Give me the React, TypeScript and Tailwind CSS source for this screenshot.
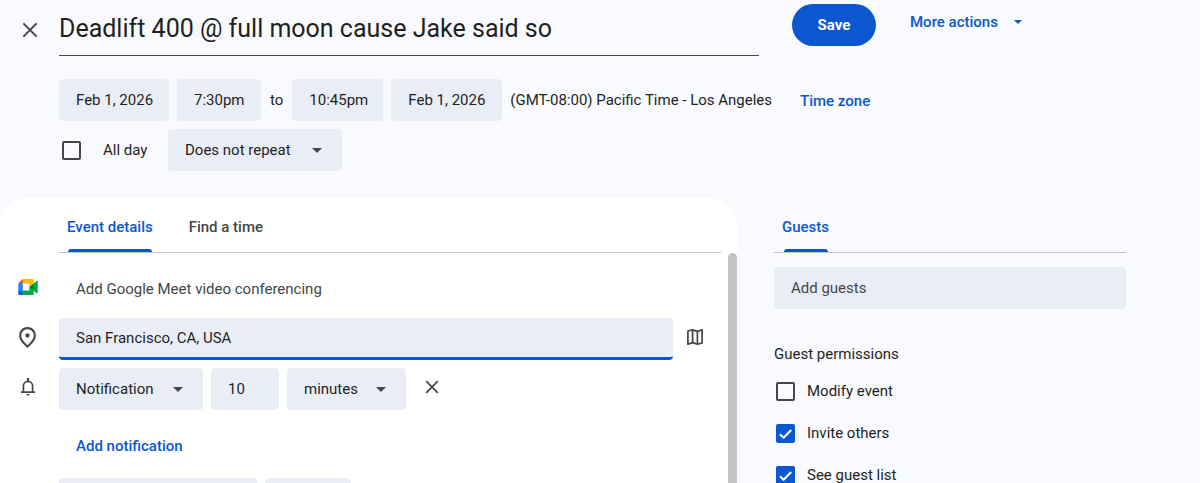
import React, { useState } from 'react';
import clsx from 'clsx';
import { MdOutlinePlace } from 'react-icons/md';

interface SelectFieldProps {
  label: string;
  options: string[];
  className?: string;
}

interface TextFieldProps {
  label: string;
  defaultValue?: string;
  placeholder?: string;
  className?: string;
}

interface CheckboxProps {
  label: string;
  checked: boolean;
  onChange: (checked: boolean) => void;
  className?: string;
}

const CaretIcon = ({ className }: { className?: string }) => (
  <svg viewBox="0 0 10 5" className={className} aria-hidden="true">
    <path d="M0 0h10L5 5z" fill="currentColor" />
  </svg>
);

const CloseIcon = ({ className }: { className?: string }) => (
  <svg viewBox="0 0 16 16" className={className} fill="none" stroke="currentColor" strokeWidth="2" aria-hidden="true">
    <path d="M1.4 1.4l13.2 13.2M14.6 1.4L1.4 14.6" />
  </svg>
);

const BellIcon = () => (
  <svg viewBox="0 0 16 18" className="h-[18px] w-4" fill="none" stroke="currentColor" aria-hidden="true">
    <path d="M1 14.2h14M3.4 14V8a4.6 4.6 0 0 1 9.2 0v6" strokeWidth="1.7" />
    <path d="M8 .6v2.6" strokeWidth="2.2" strokeLinecap="round" />
    <path d="M6.3 15.9h3.4A1.7 1.7 0 0 1 8 17.6a1.7 1.7 0 0 1-1.7-1.7z" fill="currentColor" stroke="none" />
  </svg>
);

const MeetIcon = () => (
  <svg viewBox="0 0 87.5 72" className="h-4 w-5" aria-hidden="true">
    <path fill="#00832d" d="M49.5 36l8.53 9.75 11.47 7.33 2-17.02-2-16.64-11.69 6.44z" />
    <path fill="#0066da" d="M0 51.5V66c0 3.315 2.685 6 6 6h14.5l3-10.96-3-9.54-9.95-3z" />
    <path fill="#e94235" d="M20.5 0L0 20.5l10.55 3 9.95-3 2.95-9.41z" />
    <path fill="#2684fc" d="M20.5 20.5H0v31h20.5z" />
    <path
      fill="#00ac47"
      d="M82.6 8.68L69.5 19.42v33.66l13.16 10.79c1.97 1.54 4.85.135 4.85-2.37V11c0-2.535-2.945-3.925-4.91-2.32zM49.5 36v15.5h-29V72h43c3.315 0 6-2.685 6-6V53.08z"
    />
    <path fill="#ffba00" d="M63.5 0h-43v20.5h29V36l20-16.57V6c0-3.315-2.685-6-6-6z" />
  </svg>
);

const MapIcon = () => (
  <svg viewBox="0 0 18 18" className="size-[18px]" fill="none" stroke="currentColor" aria-hidden="true">
    <path
      d="M1.9 3 6.6 1.9l4.8 1.5 4.7-1.6V15l-4.7 1.1-4.8-1.5-4.7 1.6z"
      strokeWidth="1.7"
      strokeLinejoin="round"
    />
    <path d="M6.6 1.9v12.7M11.4 3.4v12.7" strokeWidth="1.7" />
  </svg>
);

const TextField: React.FC<TextFieldProps> = ({ label, defaultValue, placeholder, className }) => (
  <input
    type="text"
    aria-label={label}
    defaultValue={defaultValue}
    placeholder={placeholder}
    className={clsx(
      'h-[42px] rounded bg-[#e9eef6] pr-3 pl-[17px] outline-none placeholder:text-[#444746] placeholder:opacity-100',
      className
    )}
  />
);

const SelectField: React.FC<SelectFieldProps> = ({ label, options, className }) => (
  <div className={clsx('relative h-[42px]', className)}>
    <select
      aria-label={label}
      className="h-full w-full appearance-none rounded bg-[#e9eef6] pr-10 pl-[17px] outline-none"
    >
      {options.map(option => (
        <option key={option}>{option}</option>
      ))}
    </select>
    <CaretIcon className="pointer-events-none absolute top-[19px] right-5 h-[5px] w-[10px] text-[#444746]" />
  </div>
);

const Checkbox: React.FC<CheckboxProps> = ({ label, checked, onChange, className }) => (
  <label className={clsx('flex items-center', className)}>
    <span className="grid size-[19px] shrink-0">
      <input
        type="checkbox"
        checked={checked}
        onChange={e => onChange(e.target.checked)}
        className="col-start-1 row-start-1 size-[19px] appearance-none rounded-xs border-2 border-[#444746] checked:border-[#0b57d0] checked:bg-[#0b57d0]"
      />
      {checked && (
        <svg viewBox="0 0 19 19" className="pointer-events-none col-start-1 row-start-1 size-[19px]" fill="none">
          <path d="M4 10.2l3.6 3.6L15.2 6" stroke="#fff" strokeWidth="2" />
        </svg>
      )}
    </span>
    {label}
  </label>
);

const App: React.FC = () => {
  const [title, setTitle] = useState('Deadlift 400 @ full moon cause Jake said so');
  const [allDay, setAllDay] = useState(false);
  const [permissions, setPermissions] = useState([
    { name: 'Modify event', allowed: false },
    { name: 'Invite others', allowed: true },
    { name: 'See guest list', allowed: true }
  ]);

  const togglePermission = (name: string, allowed: boolean) => {
    setPermissions(permissions.map(p => (p.name === name ? { ...p, allowed } : p)));
  };

  return (
    <div className="flex h-screen flex-col overflow-hidden bg-[#f8fafd] font-['Roboto',sans-serif] text-[15px] leading-5 text-[#1f1f1f]">
      <header className="flex items-start">
        <button aria-label="Close" className="flex w-[59px] justify-center pt-[22px] text-[#444746]">
          <CloseIcon className="size-4" />
        </button>
        <input
          type="text"
          aria-label="Title"
          value={title}
          onChange={e => setTitle(e.target.value)}
          className="h-14 w-[700px] border-b border-[#444746] pt-0.5 text-[25px] outline-none"
        />
        <button className="mt-1 ml-[33px] h-[42px] w-[84px] rounded-full bg-[#0b57d0] font-bold text-white">Save</button>
        <button className="mt-3 ml-[34px] flex items-center gap-4 font-medium text-[#0b57d0]">
          More actions
          <CaretIcon className="h-1 w-2" />
        </button>
      </header>

      <div className="mt-[23px] flex items-center gap-2 pl-[59px]">
        <TextField label="Start date" defaultValue="Feb 1, 2026" className="w-[110px]" />
        <TextField label="Start time" defaultValue="7:30pm" className="w-[84px]" />
        <span className="px-px">to</span>
        <TextField label="End time" defaultValue="10:45pm" className="w-[91px]" />
        <TextField label="End date" defaultValue="Feb 1, 2026" className="w-[111px]" />
        <span>(GMT-08:00) Pacific Time - Los Angeles</span>
        <button className="ml-5 pt-0.5 font-medium text-[#0b57d0]">Time zone</button>
      </div>

      <div className="mt-2 flex items-center pl-[62px]">
        <Checkbox label="All day" checked={allDay} onChange={setAllDay} className="w-[106px] gap-[22px]" />
        <SelectField label="Recurrence" options={['Does not repeat', 'Daily', 'Weekly']} className="w-[174px]" />
      </div>

      <main className="mt-[27px] grid min-h-0 flex-1 grid-cols-[737fr_463fr]">
        <section className="flex min-h-0 flex-col rounded-t-[28px] bg-white">
          <div className="mr-4 ml-[59px] flex h-[55px] shrink-0 items-stretch gap-9 border-b border-[#c4c7c5] pl-2 font-medium">
            <button className="flex flex-col items-center text-[#0b57d0]">
              <span className="flex flex-1 items-center pt-[6px]">Event details</span>
              <span className="h-[3px] w-[84px] rounded-t bg-[#0b57d0]" />
            </button>
            <button className="flex items-center pt-[3px] text-[#444746]">Find a time</button>
          </div>

          <div className="flex min-h-0 flex-1">
            <div className="flex min-w-0 flex-1 flex-col gap-2 overflow-hidden pt-[15px]">
              <div className="flex shrink-0 items-center">
                <div className="flex w-[59px] pb-1 pl-[18px]">
                  <MeetIcon />
                </div>
                <button className="h-[42px] px-[17px] text-[#444746]">Add Google Meet video conferencing</button>
              </div>

              <div className="flex shrink-0 items-center text-[#444746]">
                <div className="flex w-[59px] justify-center pr-1 pb-1">
                  <MdOutlinePlace className="size-[25px]" />
                </div>
                <TextField
                  label="Location"
                  defaultValue="San Francisco, CA, USA"
                  className="min-w-0 flex-1 border-b-3 border-[#0b57d0] text-[#1f1f1f]"
                />
                <button aria-label="Preview in Maps" className="mr-6 ml-[13px] pb-1">
                  <MapIcon />
                </button>
              </div>

              <div className="flex shrink-0 items-center">
                <div className="flex w-[59px] justify-center pr-1 pb-1 text-[#444746]">
                  <BellIcon />
                </div>
                <SelectField label="Method" options={['Notification', 'Email']} className="w-[144px]" />
                <TextField label="Amount" defaultValue="10" className="ml-2 w-[68px]" />
                <SelectField label="Unit" options={['minutes', 'hours', 'days']} className="ml-2 w-[119px]" />
                <button aria-label="Remove notification" className="ml-[19px] pb-1 text-[#444746]">
                  <CloseIcon className="size-[14px]" />
                </button>
              </div>

              <div className="mt-2 flex shrink-0 pl-[59px]">
                <button className="h-10 px-[17px] font-medium text-[#0b57d0]">Add notification</button>
              </div>

              <div className="flex shrink-0 gap-2 pt-1 pl-[59px]">
                <div className="h-[42px] w-[198px] rounded bg-[#e9eef6]" />
                <div className="h-[42px] w-[86px] rounded bg-[#e9eef6]" />
              </div>
            </div>
            <div className="w-[9px] rounded-t-full bg-[#c4c4c4]" />
          </div>
        </section>

        <aside className="mr-[74px] ml-[37px] overflow-hidden">
          <div className="flex h-[55px] border-b border-[#c4c7c5] pl-2 font-medium">
            <button className="flex flex-col items-center text-[#0b57d0]">
              <span className="flex flex-1 items-center pt-[6px]">Guests</span>
              <span className="h-[3px] w-11 rounded-t bg-[#0b57d0]" />
            </button>
          </div>
          <TextField label="Add guests" placeholder="Add guests" className="mt-[14px] w-full" />
          <h2 className="mt-[35px]">Guest permissions</h2>
          <div className="mt-[17px] flex flex-col gap-[22px] pl-0.5">
            {permissions.map(permission => (
              <Checkbox
                key={permission.name}
                label={permission.name}
                checked={permission.allowed}
                onChange={allowed => togglePermission(permission.name, allowed)}
                className="gap-3"
              />
            ))}
          </div>
        </aside>
      </main>
    </div>
  );
};

export default App;
